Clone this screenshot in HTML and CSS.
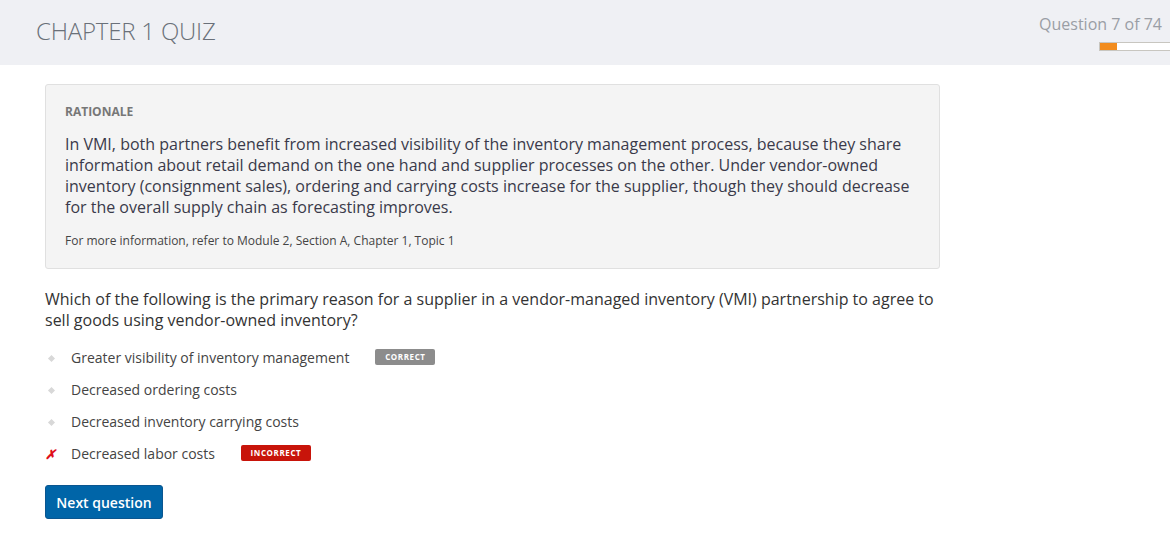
FILE: index.html
```html
<!DOCTYPE html>
<html>
<head>
<meta charset="utf-8">
<link rel="stylesheet" href="styles.css">
</head>
<body>
<header class="header">
  <h1 class="title">CHAPTER 1 QUIZ</h1>
  <div class="progress">
    <div class="progress-label">Question 7 of 74</div>
    <div class="progress-bar"><div class="progress-fill" style="width:17px"></div></div>
  </div>
</header>
<main class="main">
  <section class="rationale">
    <h2 class="rationale-title">RATIONALE</h2>
    <p class="rationale-text">In VMI, both partners benefit from increased visibility of the inventory management process, because they share information about retail demand on the one hand and supplier processes on the other. Under vendor-owned inventory (consignment sales), ordering and carrying costs increase for the supplier, though they should decrease for the overall supply chain as forecasting improves.</p>
    <p class="rationale-ref">For more information, refer to Module 2, Section A, Chapter 1, Topic 1</p>
  </section>
  <p class="question">Which of the following is the primary reason for a supplier in a vendor-managed inventory (VMI) partnership to agree to sell goods using vendor-owned inventory?</p>
  <ul class="options">
    <li class="option"><span class="mark"><span class="dot"></span></span><span class="opt-text">Greater visibility of inventory management</span><span class="badge badge-correct">CORRECT</span></li>
    <li class="option"><span class="mark"><span class="dot"></span></span><span class="opt-text">Decreased ordering costs</span></li>
    <li class="option"><span class="mark"><span class="dot"></span></span><span class="opt-text">Decreased inventory carrying costs</span></li>
    <li class="option"><span class="mark mark-x">✗</span><span class="opt-text">Decreased labor costs</span><span class="badge badge-incorrect">INCORRECT</span></li>
  </ul>
  <button class="next-btn">Next question</button>
</main>
</body>
</html>
```
FILE: styles.css
```css
* { box-sizing: border-box; }
html, body { margin: 0; padding: 0; }
body {
  font-family: "Open Sans", "Liberation Sans", sans-serif;
  background: #fff;
  color: #333;
  width: 1170px;
  height: 535px;
  overflow: hidden;
}
.header {
  height: 65px;
  background: #eff0f4;
  display: flex;
  justify-content: space-between;
  align-items: flex-start;
  padding-left: 36px;
}
.title {
  margin: 15px 0 0 0;
  font-size: 24px;
  font-weight: 300;
  color: #6a7079;
  line-height: 32px;
  letter-spacing: -0.2px;
}
.progress {
  display: flex;
  flex-direction: column;
  align-items: flex-end;
  padding-top: 13px;
}
.progress-label {
  font-size: 16px;
  color: #9a9ea5;
  line-height: 22px;
  margin-right: 8px;
}
.progress-bar {
  margin-top: 7px;
  width: 71px;
  height: 9px;
  border: 1px solid #c8c6c0;
  border-right: none;
  background: #fff;
  align-self: flex-end;
}
.progress-fill {
  height: 100%;
  background: #f28c1e;
}
.main {
  padding: 19px 45px 0 45px;
  width: 985px;
}
.rationale {
  background: #f4f4f4;
  border: 1px solid #e0e0e0;
  border-radius: 3px;
  padding: 18px 19px 19px 19px;
}
.rationale-title {
  margin: 0;
  font-size: 12px;
  font-weight: 700;
  color: #777;
  line-height: 17px;
}
.rationale-text {
  margin: 14px 0 0 0;
  font-size: 16px;
  line-height: 21px;
  color: #3a3a4a;
}
.rationale-ref {
  margin: 14px 0 0 0;
  font-size: 12px;
  line-height: 17px;
  color: #444;
}
.question {
  margin: 20px 0 0 0;
  font-size: 16px;
  line-height: 21px;
  color: #333;
}
.options {
  list-style: none;
  margin: 11px 0 0 0;
  padding: 0;
}
.option {
  display: flex;
  align-items: center;
  height: 32px;
  font-size: 14px;
  color: #444;
}
.mark {
  width: 26px;
  display: flex;
  align-items: center;
  padding-left: 3px;
}
.dot {
  width: 5px;
  height: 5px;
  background: #d8d8d8;
  transform: rotate(45deg);
  margin-left: 1px;
}
.mark-x {
  color: #e0101a;
  font-size: 13px;
  font-weight: 700;
  padding-left: 0;
  font-style: italic;
}
.opt-text { line-height: 20px; }
.badge {
  display: inline-block;
  color: #fff;
  font-size: 8px;
  font-weight: 700;
  letter-spacing: 0.6px;
  line-height: 16px;
  height: 16px;
  border-radius: 2px;
  text-align: center;
  margin-top: -2px;
}
.badge-correct {
  background: #8c8c8c;
  width: 60px;
  margin-left: 26px;
}
.badge-incorrect {
  background: #c8140a;
  width: 70px;
  margin-left: 26px;
}
.next-btn {
  margin-top: 15px;
  font-family: inherit;
  font-size: 14px;
  font-weight: 600;
  color: #fff;
  background: #0065a8;
  border: 1px solid #0a5690;
  border-radius: 3px;
  height: 34px;
  width: 118px;
  padding: 0;
  cursor: pointer;
}
```
